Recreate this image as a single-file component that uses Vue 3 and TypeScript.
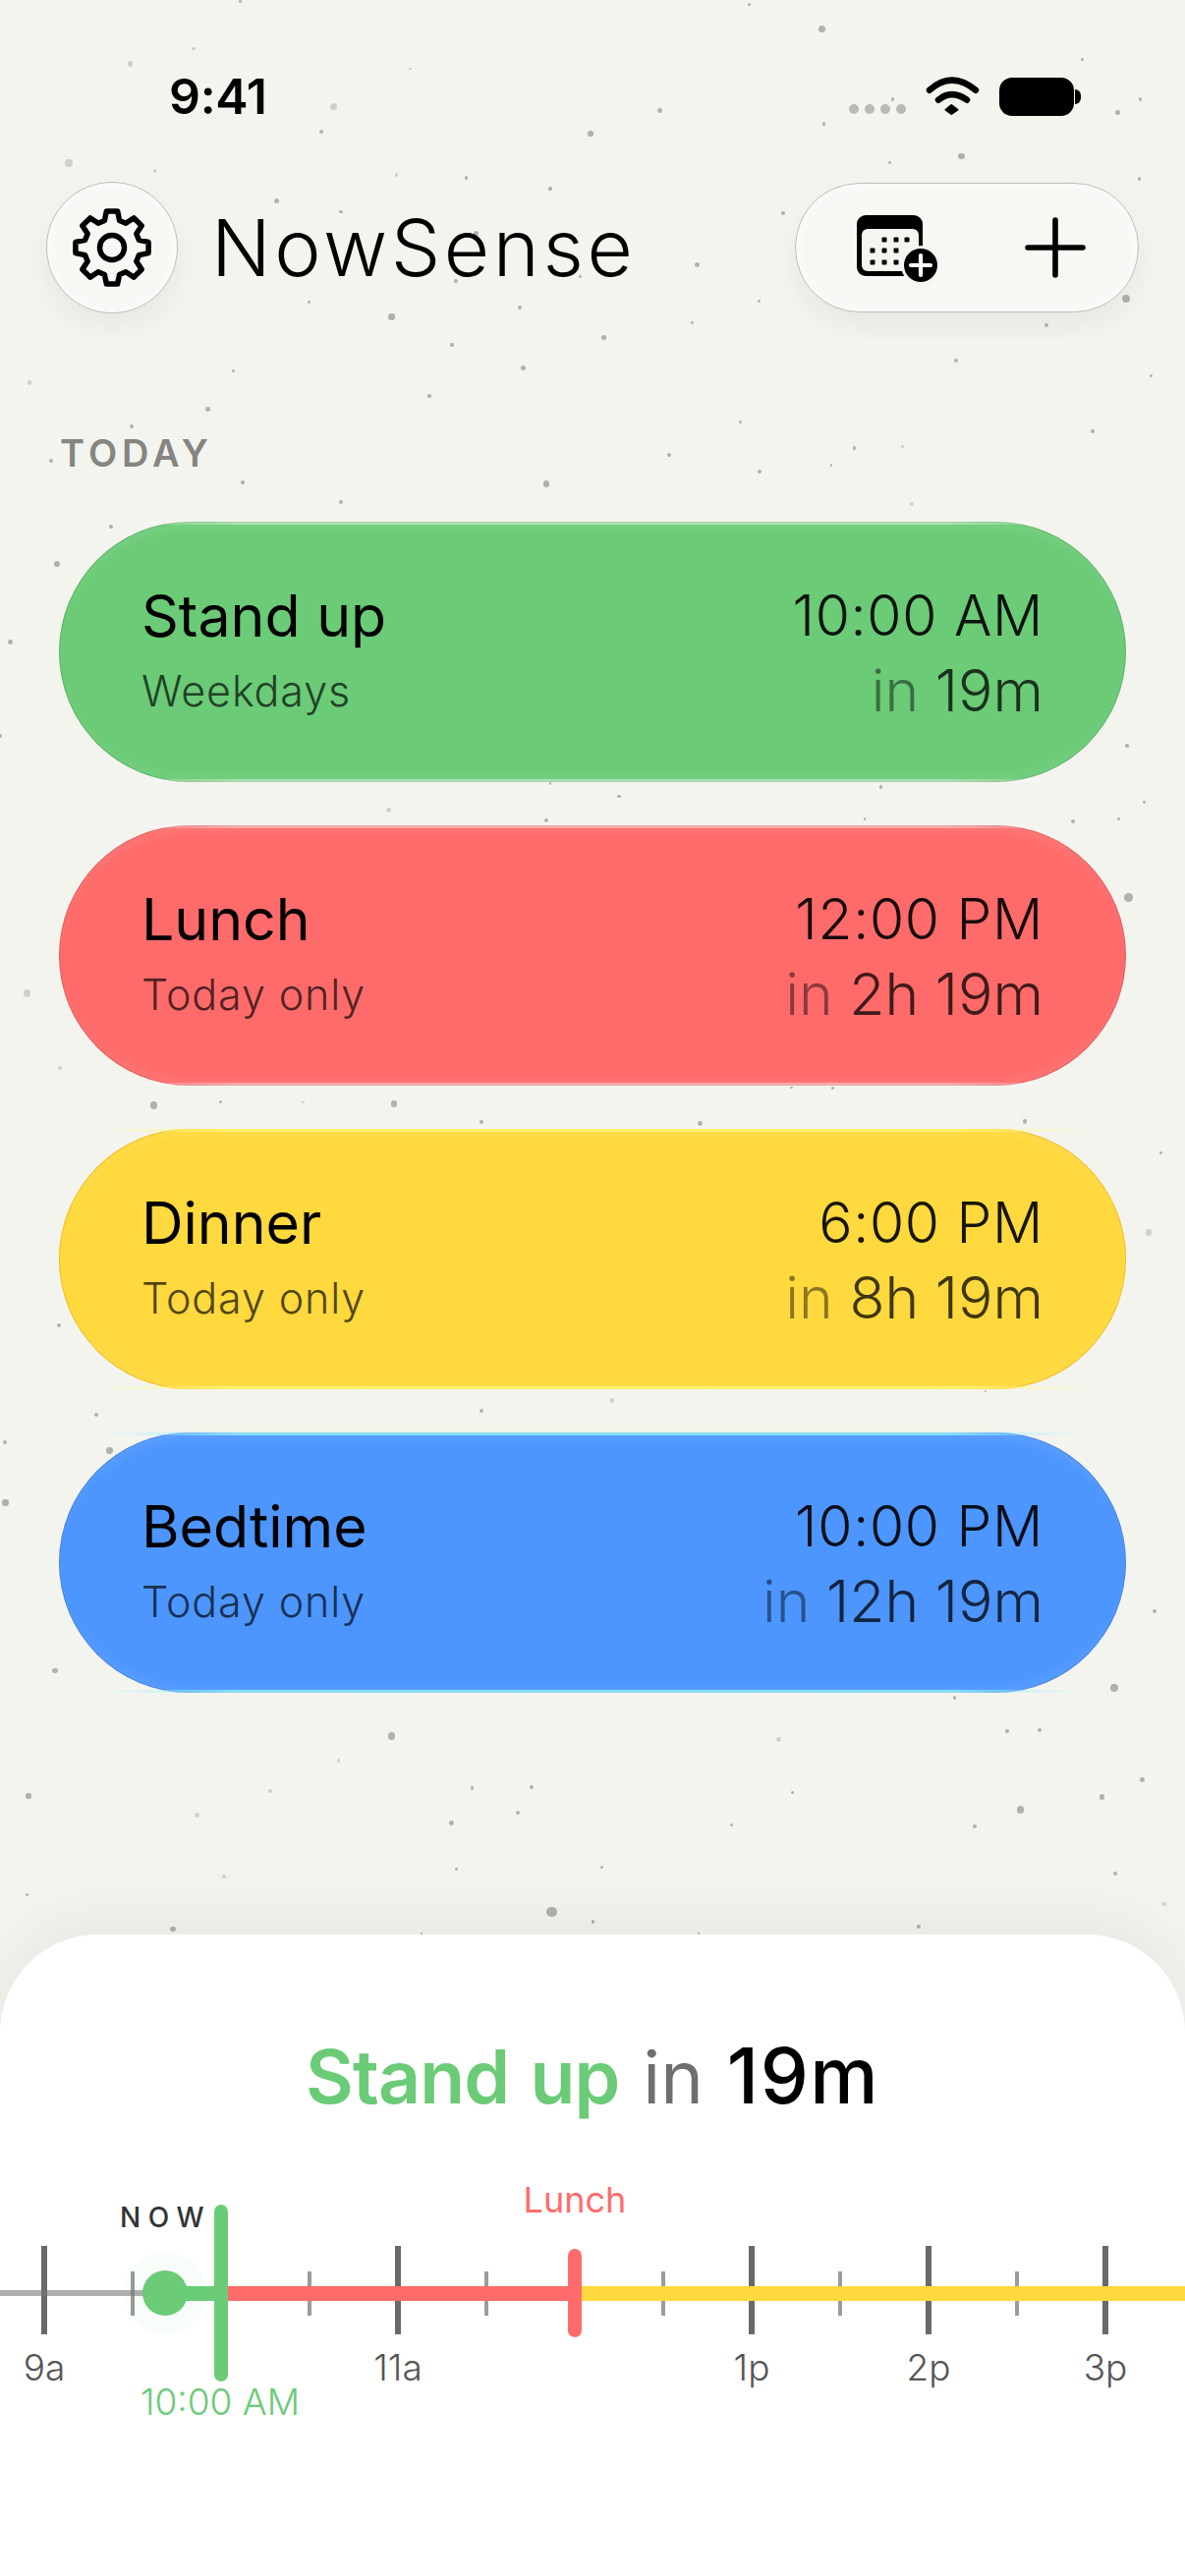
<script setup lang="ts">
interface Reminder { name: string; sub: string; time: string; left: string; tone: string }
const reminders: Reminder[] = [
  { name: 'Stand up', sub: 'Weekdays', time: '10:00 AM', left: '19m', tone: 'green' },
  { name: 'Lunch', sub: 'Today only', time: '12:00 PM', left: '2h 19m', tone: 'red' },
  { name: 'Dinner', sub: 'Today only', time: '6:00 PM', left: '8h 19m', tone: 'yellow' },
  { name: 'Bedtime', sub: 'Today only', time: '10:00 PM', left: '12h 19m', tone: 'blue' },
]

const HOUR = 180
const X9 = 45
const xAt = (h: number) => X9 + (h - 9) * HOUR

const hours = [
  { h: 9, label: '9a' }, { h: 11, label: '11a' }, { h: 13, label: '1p' }, { h: 14, label: '2p' }, { h: 15, label: '3p' },
].map((t) => ({ ...t, x: xAt(t.h) }))
const minors = [9.5, 11.5, 10.5, 12.5, 13.5, 14.5].map((h) => xAt(h))
const seg = (a: number, b: number) => ({ left: a + 'px', width: b - a + 'px' })

// Gear outline
const gearPath = (() => {
  const cx = 46, cy = 46, outer = 37.5, root = 28.5, n = 8
  const pts: string[] = []
  for (let i = 0; i < n; i++) {
    const a = (i * 2 * Math.PI) / n - Math.PI / 2
    const p = (r: number, d: number) => {
      const x = cx + r * Math.cos(a + d)
      const y = cy + r * Math.sin(a + d)
      return x.toFixed(2) + ' ' + y.toFixed(2)
    }
    pts.push((i === 0 ? 'M' : 'L') + p(root, -0.27), 'L' + p(outer, -0.15), 'L' + p(outer, 0.15), 'L' + p(root, 0.27))
  }
  return pts.join(' ') + ' Z'
})()

// Speckles: [x, y, size] measured in 1.3x / 3x crops, bands start at the given y
const bands: [number, number[][]][] = [
  [0, [[318,5,3],[991,13,3],[1087,88,8],[256,148,3,1],[172,195,6,1],[1432,182,3],[543,210,2,1],[441,325,8,1],[873,337,5],[1090,378,3],[425,402,5],[781,408,6],[1181,303,3],[1509,303,3],[1479,343,6],[91,498,8,1],[205,522,3,1],[525,534,3,1],[617,543,3],[1272,477,7],[1177,496,3],[1507,546,3],[728,576,3],[366,614,6],[451,646,3],[1036,650,4],[630,712,6],[768,845,3],[603,857,4],[922,809,5],[409,922,3],[1004,919,3],[688,938,4],[518,967,7],[916,985,3],[1385,993,4],[799,1031,6],[598,1053,3],[1490,911,9],[692,1124,6],[1265,1101,4],[309,1133,3],[1523,1148,3],[39,1168,5,1],[568,1209,3],[275,1250,5],[174,1302,4],[1446,1317,4],[980,1289,3],[1130,1368,3],[1194,1363,2,1],[885,1389,4],[68,1408,4],[1100,1420,2],[1005,1439,4],[321,1473,3],[723,1477,7]]],
  [480, [[451,94,4],[1206,98,4,1],[147,167,4],[75,282,7],[14,520,5],[0,808,4],[1491,837,3],[728,953,2],[1165,963,3],[819,992,3],[514,1033,5,1],[723,1066,4],[1144,1060,2],[1514,1009,3],[1419,1068,4],[1480,1060,3],[1493,1300,10]]],
  [980, [[36,93,8,1],[79,322,4,1],[204,435,8],[292,424,3],[401,426,2,1],[521,431,7],[1047,381,2],[1102,382,3],[637,486,4],[926,491,5],[1356,485,5],[1536,581,3],[1520,824,7,1],[78,1106,4],[810,1336,5,1],[1304,1308,2],[637,1369,4],[127,1380,4],[6,1465,4],[145,1490,7]]],
  [1480, [[7,148,7],[1527,481,4],[73,662,6],[1474,715,9],[1263,744,3],[518,861,9],[1030,871,5,1],[1333,847,4],[1376,844,4],[448,936,3,1],[38,1044,6],[357,1030,4,1],[625,1020,3],[703,1016,4],[1048,1034,3],[1511,994,5],[1458,1047,6],[1350,1086,9],[261,1102,5,1],[685,1095,4],[597,1127,5],[968,1132,3],[1289,1137,4],[604,1267,3],[796,1261,3],[297,1290,4,1],[1476,1282,4],[36,1345,3],[1541,1375,4,1],[730,1398,12],[785,1428,3],[229,1451,6],[1216,1443,4],[558,1466,2],[924,1464,2]]],
]
const speckles = bands.flatMap(([y0, list]) =>
  list.map(([zx, zy, w, pale]) => {
    const s = w / 1.3 + 1
    return {
      left: zx / 1.3 - s / 2 + 'px',
      top: y0 + zy / 3 - s / 2 + 'px',
      width: s + 'px',
      height: s + 'px',
      opacity: pale ? 0.45 : 0.85,
    }
  }),
)
const calDots: [number, number][] = [[28,25],[40,25],[51,25],[16,36],[28,36],[40,36],[16,48],[28,48],[40,48]]
</script>

<template>
  <div class="page">
    <div class="speckles" aria-hidden="true">
      <i v-for="(s, i) in speckles" :key="i" class="speck" :style="s"></i>
    </div>

    <div class="status">
      <span class="clock">9:41</span>
      <div class="status-icons">
        <div class="cell-dots"><i></i><i></i><i></i><i></i></div>
        <svg class="wifi" width="56" height="42" viewBox="0 0 56 42">
          <path d="M5 15.7 Q27.3 -4.5 52 15.7" fill="none" stroke="#000" stroke-width="6.5" stroke-linecap="round" />
          <path d="M14 25.7 Q27.3 14.5 43 25.7" fill="none" stroke="#000" stroke-width="6.5" stroke-linecap="round" />
          <path d="M21.5 35.7 L27.3 31 L33.5 35.7 L27.3 40 Z" fill="#000" stroke="#000" stroke-width="2" stroke-linejoin="round" />
        </svg>
        <div class="battery"><span class="battery-body"></span><span class="battery-nub"></span></div>
      </div>
    </div>

    <header class="head">
      <button class="round glass" aria-label="Settings">
        <svg width="92" height="92" viewBox="0 0 92 92" fill="none" stroke="#000" stroke-width="5.5" stroke-linejoin="round">
          <path :d="gearPath" />
          <circle cx="46" cy="46" r="12.5" />
        </svg>
      </button>
      <h1 class="brand">NowSense</h1>
      <div class="capsule glass">
        <svg class="cal" width="90" height="72" viewBox="0 0 90 72">
          <rect x="0" y="0" width="67" height="62" rx="9" fill="#000" />
          <rect x="5" y="14" width="58" height="43" rx="6" fill="#f4f4f0" />
          <rect v-for="(d, i) in calDots" :key="i" :x="d[0] - 2.5" :y="d[1] - 2.5" width="5" height="5" rx="1" fill="#000" />
          <circle cx="65" cy="51" r="20" fill="#f4f4f0" />
          <circle cx="65" cy="51" r="17" fill="#000" />
          <path d="M55 51 H75 M65 41 V61" stroke="#fff" stroke-width="4.2" stroke-linecap="round" />
        </svg>
        <svg class="plus" width="62" height="62" viewBox="0 0 62 62">
          <path d="M3 31 H59 M31 3 V59" stroke="#000" stroke-width="5.6" stroke-linecap="round" />
        </svg>
      </div>
    </header>

    <div class="label">TODAY</div>

    <section class="cards">
      <article v-for="r in reminders" :key="r.name" class="card" :class="r.tone">
        <div class="col">
          <div class="name">{{ r.name }}</div>
          <div class="sub">{{ r.sub }}</div>
        </div>
        <div class="col end">
          <div class="time">{{ r.time }}</div>
          <div class="left"><span class="in">in </span>{{ r.left }}</div>
        </div>
      </article>
    </section>

    <section class="sheet">
      <h2 class="next"><span class="next-name">Stand up</span> <span class="next-in">in</span> <span class="next-left">19m</span></h2>
      <div class="timeline">
        <div class="tick minor" v-for="x in minors" :key="x" :style="{ left: x - 2 + 'px' }"></div>
        <template v-for="t in hours" :key="t.h">
          <div class="tick major" :style="{ left: t.x - 3 + 'px' }"></div>
          <div class="hour" :style="{ left: t.x + 'px' }">{{ t.label }}</div>
        </template>
        <div class="bar past" :style="seg(0, 168)"></div>
        <div class="bar go" :style="seg(168, 225)"></div>
        <div class="bar lunch" :style="seg(225, 585)"></div>
        <div class="bar dinner" :style="seg(585, 1206)"></div>
        <div class="halo"></div>
        <div class="dot"></div>
        <div class="mark mark-green"></div>
        <div class="mark mark-red"></div>
        <div class="now">NOW</div>
        <div class="tag tag-red">Lunch</div>
        <div class="tag tag-green">10:00 AM</div>
      </div>
    </section>
  </div>
</template>

<style>
html, body { margin: 0; background: #f4f4ef; }
</style>

<style scoped>
.page {
  position: relative;
  width: 1206px;
  height: 2622px;
  overflow: hidden;
  display: flex;
  flex-direction: column;
  background: #f4f4ef;
  font-family: Inter, "Liberation Sans", sans-serif;
  color: #000;
}
.speckles { position: absolute; inset: 0; }
.speck { position: absolute; border-radius: 50%; background: #a3a3a0; }

.status {
  position: relative;
  height: 186px;
  flex: none;
  box-sizing: border-box;
  padding: 70px 106px 0 172px;
  display: flex;
  justify-content: space-between;
  align-items: flex-start;
}
.clock { font-size: 50px; line-height: 56px; font-weight: 600; letter-spacing: -0.3px; }
.status-icons { display: flex; align-items: flex-start; width: 236px; height: 50px; position: relative; }
.cell-dots { display: flex; gap: 6px; margin-top: 36px; }
.cell-dots i { width: 10px; height: 10px; border-radius: 50%; background: #b9b9b5; }
.wifi { margin: 6px 0 0 19px; flex: none; }
.battery { display: flex; align-items: center; margin: 9px 0 0 20px; }
.battery-body { width: 76px; height: 39px; border-radius: 13px; background: #000; }
.battery-nub { width: 6px; height: 15px; margin-left: 1px; border-radius: 0 8px 8px 0; background: #000; }

.head {
  position: relative;
  flex: none;
  height: 132px;
  padding: 0 47px;
  display: flex;
  align-items: center;
}
.glass {
  box-sizing: border-box;
  border: 1.5px solid #bfbfba;
  background: #f7f7f4;
  box-shadow: 0 14px 30px rgba(0, 0, 0, 0.05), inset 0 0 14px rgba(255, 255, 255, 0.9);
}
.round {
  width: 134px;
  height: 134px;
  flex: none;
  padding: 0;
  border-radius: 50%;
  display: flex;
  align-items: center;
  justify-content: center;
}
.brand {
  margin: 0 0 0 34px;
  font-size: 80px;
  line-height: 96px;
  font-weight: 300;
  letter-spacing: 3.6px;
}
.capsule {
  margin-left: auto;
  width: 350px;
  height: 132px;
  border-radius: 66px;
  display: flex;
  align-items: center;
  position: relative;
}
.cal { margin: 6px 0 0 62px; flex: none; }
.plus { margin-left: 81px; flex: none; }

.label {
  position: relative;
  flex: none;
  margin: 125px 0 0 61px;
  height: 36px;
  line-height: 36px;
  font-size: 38px;
  font-weight: 600;
  letter-spacing: 5px;
  color: #858581;
}
.cards {
  position: relative;
  flex: none;
  margin-top: 52px;
  padding: 0 60px;
  display: flex;
  flex-direction: column;
  gap: 44px;
}
.card {
  --edge: rgba(0, 0, 0, 0.13);
  --shine: rgba(255, 255, 255, 0.4);
  position: relative;
  height: 265px;
  box-sizing: border-box;
  border-radius: 132.5px;
  padding: 0 84px 3px;
  display: flex;
  justify-content: space-between;
  align-items: center;
  box-shadow:
    inset 0 0 0 1px var(--edge),
    inset 0 14px 12px -8px rgba(255, 255, 255, 0.1),
    inset 0 -14px 12px -8px rgba(255, 255, 255, 0.08);
}
.card::before,
.card::after {
  content: "";
  position: absolute;
  left: 40px;
  right: 40px;
  height: 3px;
  background: linear-gradient(90deg, transparent 0, var(--shine) 14%, var(--shine) 86%, transparent 100%);
}
.card::before { top: 0; }
.card::after { bottom: 0; }
.green { background: #6bcb77; }
.red { background: #ff6b6b; }
.yellow { background: #ffd93d; --edge: rgba(230, 170, 20, 0.55); --shine: rgba(255, 250, 120, 0.8); }
.blue { background: #4d96ff; --shine: rgba(150, 240, 255, 0.8); }
.col { display: flex; flex-direction: column; gap: 18px; }
.col.end { align-items: flex-end; }
.name { font-size: 59px; line-height: 64px; font-weight: 400; }
.sub { font-size: 43px; line-height: 52px; font-weight: 300; opacity: 0.68; letter-spacing: 0.9px; }
.time { font-size: 57px; line-height: 64px; font-weight: 300; opacity: 0.9; letter-spacing: 0.7px; }
.left { font-size: 59px; line-height: 52px; font-weight: 300; opacity: 0.75; }
.in { opacity: 0.6; }

.sheet {
  position: relative;
  margin-top: auto;
  flex: none;
  height: 653px;
  background: #fff;
  border-radius: 100px 100px 0 0;
  box-shadow: 0 -12px 70px rgba(0, 0, 0, 0.06);
}
.next {
  margin: 0;
  padding-top: 100px;
  text-align: center;
  font-size: 74px;
  line-height: 88px;
  font-weight: 400;
  word-spacing: 3px;
}
.next-name { color: #6bcb77; font-weight: 600; font-size: 75px; letter-spacing: -0.8px; }
.next-in { color: #6e6e6e; }
.next-left { color: #000; font-weight: 500; font-size: 78px; letter-spacing: 1.5px; }

.timeline { position: absolute; left: 0; top: 0; width: 1206px; height: 653px; }
.tick { position: absolute; }
.major { width: 6px; top: 317px; height: 90px; background: #696969; }
.minor { width: 4px; top: 343px; height: 45px; background: #9b9b9b; }
.bar { position: absolute; top: 358px; height: 15px; }
.past { top: 362px; height: 6px; background: rgba(120, 120, 120, 0.6); }
.go { background: #6bcb77; }
.lunch { background: #ff6b6b; }
.dinner { background: #ffd93d; }
.halo { position: absolute; left: 126px; top: 323px; width: 84px; height: 84px; border-radius: 50%; background: rgba(107, 203, 119, 0.04); }
.dot { position: absolute; left: 145px; top: 342px; width: 46px; height: 46px; border-radius: 50%; background: #6bcb77; }
.mark { position: absolute; width: 14px; border-radius: 7px; }
.mark-green { left: 218px; top: 275px; height: 180px; background: #6bcb77; }
.mark-red { left: 578px; top: 320px; height: 90px; background: #ff6b6b; }
.hour {
  position: absolute;
  top: 421px;
  transform: translateX(-50%);
  font-size: 37px;
  line-height: 40px;
  font-weight: 300;
  color: #555;
}
.now {
  position: absolute;
  left: 122px;
  top: 271px;
  font-size: 28px;
  line-height: 34px;
  font-weight: 500;
  letter-spacing: 7.5px;
  color: #333;
}
.tag {
  position: absolute;
  font-size: 36px;
  line-height: 40px;
  font-weight: 400;
  transform: translateX(-50%);
}
.tag-red { left: 585px; top: 250px; color: #ff6b6b; }
.tag-green { left: 224px; top: 456px; color: #6bcb77; font-size: 37px; font-weight: 300; }
</style>
